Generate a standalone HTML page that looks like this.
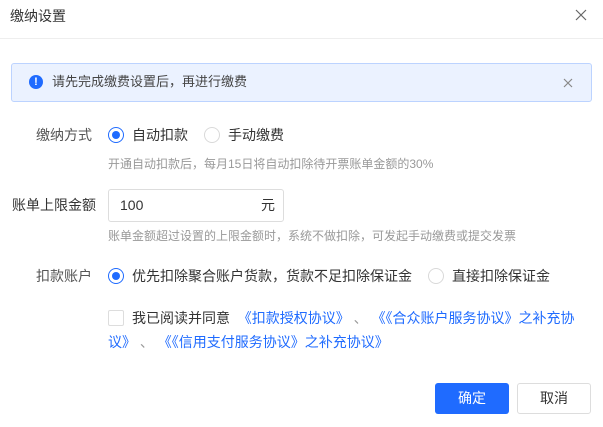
<!DOCTYPE html>
<html><head><meta charset="utf-8"><style>
*{margin:0;padding:0;box-sizing:border-box}
body{width:603px;height:427px;background:#fff;font-family:"Liberation Sans","Noto Sans CJK SC",sans-serif;color:#333;position:relative;overflow:hidden;font-size:14px}
.a{position:absolute;white-space:nowrap}
.radio{position:absolute;width:16px;height:16px;border-radius:50%;border:1px solid #d9d9d9;background:#fff}
.radio.on{border-color:#1f6bff}
.radio.on::after{content:"";position:absolute;left:3px;top:3px;width:8px;height:8px;border-radius:50%;background:#1f6bff}
.hint{font-size:12px;color:#999}
.lbl{position:absolute;right:511px;white-space:nowrap;color:#555}
a{color:#1f6bff;text-decoration:none}
</style></head><body>
<div class="a" style="left:10px;top:6px;font-size:14px;color:#333">缴纳设置</div>
<svg class="a" style="left:575px;top:9px" width="12" height="12"><path d="M1 1L11 11M11 1L1 11" stroke="#666" stroke-width="1.2"/></svg>
<div class="a" style="left:0;top:38px;width:603px;height:1px;background:#eee"></div>
<div class="a" style="left:11px;top:63px;width:581px;height:39px;background:#ebf2ff;border:1px solid #bcd3ff;border-radius:3px"></div>
<div class="a" style="left:29px;top:75px;width:14px;height:14px;border-radius:50%;background:#1f6bff;color:#fff;font-size:11px;font-weight:bold;text-align:center;line-height:14px">!</div>
<div class="a" style="left:52px;top:73px;font-size:13px;line-height:18px;color:#444">请先完成缴费设置后，再进行缴费</div>
<svg class="a" style="left:563px;top:78px" width="10" height="10"><path d="M1 1L9 9M9 1L1 9" stroke="#888" stroke-width="1.2"/></svg>

<div class="lbl" style="top:126px;line-height:18px">缴纳方式</div>
<div class="radio on" style="left:108px;top:127px"></div>
<div class="a" style="left:132px;top:126px;line-height:18px">自动扣款</div>
<div class="radio" style="left:204px;top:127px"></div>
<div class="a" style="left:228px;top:126px;line-height:18px">手动缴费</div>
<div class="a hint" style="left:108px;top:155px">开通自动扣款后，每月15日将自动扣除待开票账单金额的30%</div>

<div class="lbl" style="top:196px;line-height:18px;color:#333;right:507px">账单上限金额</div>
<div class="a" style="left:108px;top:189px;width:176px;height:33px;border:1px solid #ddd;border-radius:3px"></div>
<div class="a" style="left:120px;top:196px;line-height:18px">100</div>
<div class="a" style="left:261px;top:196px;line-height:18px">元</div>
<div class="a hint" style="left:108px;top:227px">账单金额超过设置的上限金额时，系统不做扣除，可发起手动缴费或提交发票</div>

<div class="lbl" style="top:267px;line-height:18px">扣款账户</div>
<div class="radio on" style="left:108px;top:268px"></div>
<div class="a" style="left:132px;top:267px;line-height:18px">优先扣除聚合账户货款，货款不足扣除保证金</div>
<div class="radio" style="left:428px;top:268px"></div>
<div class="a" style="left:452px;top:267px;line-height:18px">直接扣除保证金</div>

<div class="a" style="left:108px;top:310px;width:16px;height:16px;border:1px solid #ddd;border-radius:2px"></div>
<div class="a" style="left:108px;top:306px;width:472px;white-space:normal;line-height:24px;text-indent:24px">我已阅读并同意 &nbsp;<a>《扣款授权协议》</a><span style="color:#999"> 、 </span><a>《《合众账户服务协议》之补充协议》</a><span style="color:#999"> 、 </span><a>《《信用支付服务协议》之补充协议》</a></div>

<div class="a" style="left:435px;top:383px;width:74px;height:31px;background:#1f6bff;border-radius:3px;color:#fff;text-align:center;line-height:31px">确定</div>
<div class="a" style="left:517px;top:383px;width:74px;height:31px;border:1px solid #ddd;border-radius:3px;text-align:center;line-height:29px">取消</div>
</body></html>
